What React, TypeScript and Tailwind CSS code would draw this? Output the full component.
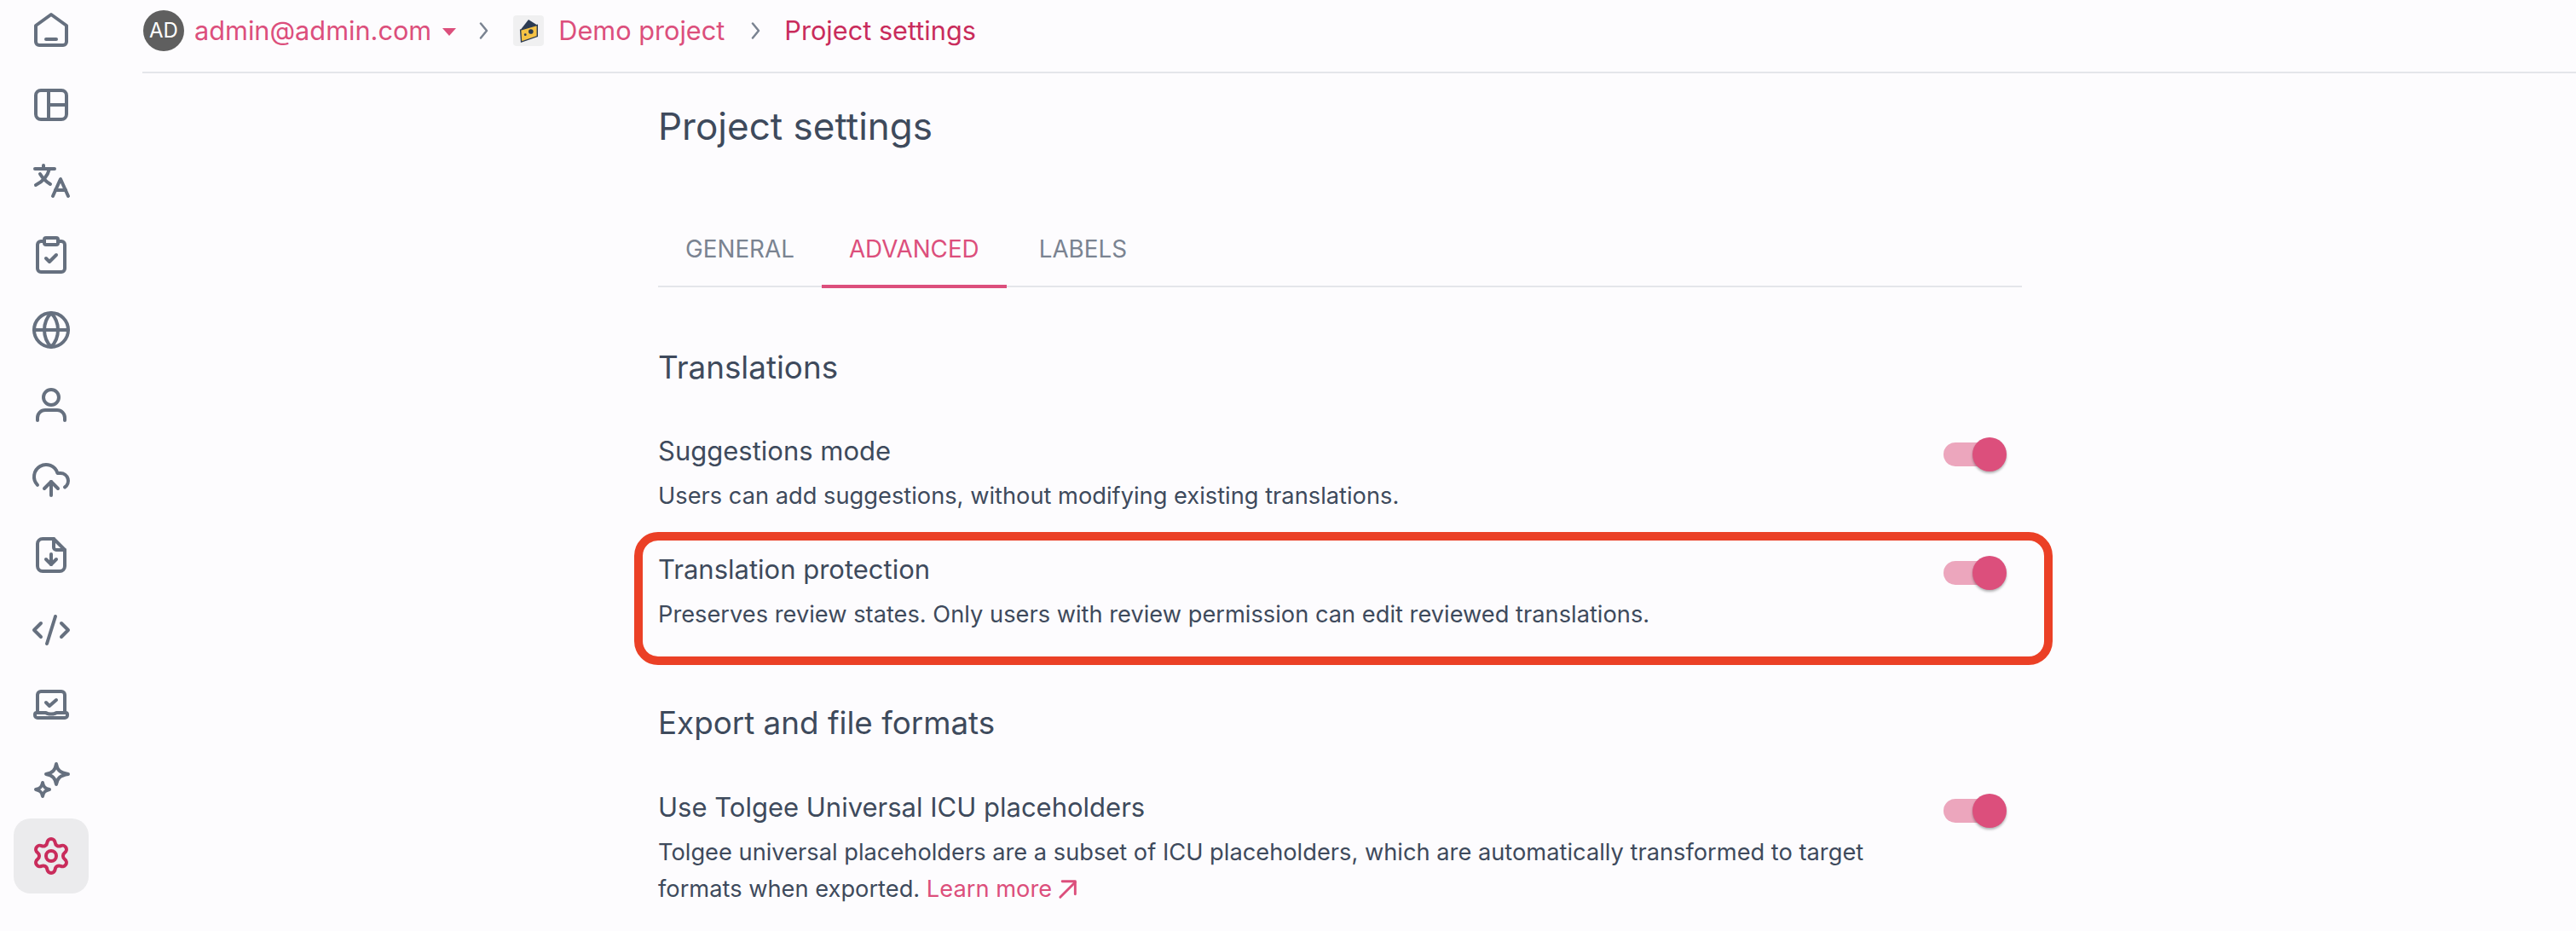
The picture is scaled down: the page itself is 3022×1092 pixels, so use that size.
import { ClipboardCheck, CloudUpload, CodeXml, Globe, Settings } from "lucide-react";
import type { ReactNode } from "react";

function Glyph({ children }: { children: ReactNode }) {
  return (
    <svg
      viewBox="0 0 24 24"
      fill="none"
      stroke="currentColor"
      strokeWidth={2}
      strokeLinecap="round"
      strokeLinejoin="round"
      className="w-12 h-12"
    >
      {children}
    </svg>
  );
}

const lucideProps = { size: 48, strokeWidth: 2 };

const navIcons = [
  <Glyph key="home">
    <path d="M9 17.500h6" />
    <path d="M3 9.500 12 3l9 6.500V19a2 2 0 0 1-2 2H5a2 2 0 0 1-2-2z" />
  </Glyph>,
  <Glyph key="layout">
    <rect x="3" y="3.500" width="18" height="17" rx="3" />
    <path d="M10.500 3.500v17" />
    <path d="M10.500 12H21" />
  </Glyph>,
  <Glyph key="lang">
    <path d="M2.500 5.500H14" />
    <path d="M7.500 3.500v2" />
    <path d="M11 5.500c-1 4-4 7.500-8 9.500" />
    <path d="M5.500 8.500c1.500 2.500 3.500 4.500 6 6" />
    <path d="m22 21.500-4.500-10-4.500 10" />
    <path d="M14.500 18h6" />
  </Glyph>,
  <ClipboardCheck key="tasks" {...lucideProps} />,
  <Globe key="globe" {...lucideProps} />,
  <Glyph key="user">
    <circle cx="12" cy="7.500" r="4.500" />
    <path d="M4 21v-1.500A4.500 4.500 0 0 1 8.500 15h7a4.500 4.500 0 0 1 4.500 4.500V21" />
  </Glyph>,
  <CloudUpload key="import" {...lucideProps} />,
  <Glyph key="export">
    <path d="M13.500 2.500H7a3 3 0 0 0-3 3v13a3 3 0 0 0 3 3h10a3 3 0 0 0 3-3V9z" />
    <path d="M13.500 2.500V7.500a1.500 1.500 0 0 0 1.500 1.500h5" />
    <path d="M12 11.500v6" />
    <path d="m9 14.500 3 3 3-3" />
  </Glyph>,
  <CodeXml key="code" {...lucideProps} />,
  <Glyph key="laptop">
    <path d="M4 16V6a2 2 0 0 1 2-2h12a2 2 0 0 1 2 2v10" />
    <path d="M3.500 16.500h5.500c1 1 5 1 6 0h5.500a1 1 0 0 1 1 1v.500a1.500 1.500 0 0 1-1.500 1.500H4A1.500 1.500 0 0 1 2.500 18v-.500a1 1 0 0 1 1-1z" />
    <path d="m9 10.500 2 2 4-3.500" />
  </Glyph>,
  <Glyph key="sparkles">
    <path d="M15 2.500c.6 3.600 2 5.200 7 6-5 .8-6.400 2.400-7 6-.6-3.600-2-5.200-6-6 4-.8 5.400-2.400 6-6z" />
    <path d="M7 13.500c.4 2.400 1.300 3.400 4 4-2.700.6-3.600 1.600-4 4-.4-2.400-1.300-3.400-4-4 2.700-.6 3.600-1.600 4-4z" />
  </Glyph>,
];

function Sidebar() {
  return (
    <aside className="w-[120px] shrink-0 flex flex-col items-center pt-[11px] text-[#66707f]">
      {navIcons.map((icon, i) => (
        <div key={i} className="h-[88px] flex items-start justify-center">
          {icon}
        </div>
      ))}
      <div className="-mt-[19px] w-[88px] h-[88px] rounded-[20px] bg-[#ebebed] flex items-center justify-center text-[#c92c5c]">
        <Settings {...lucideProps} />
      </div>
    </aside>
  );
}

function Crumb() {
  return (
    <svg viewBox="0 0 13 20" fill="none" stroke="#7a8391" strokeWidth={2.500} strokeLinecap="round" strokeLinejoin="round" className="w-[13px] h-5">
      <path d="m3 1.500 7 8.500-7 8.500" />
    </svg>
  );
}

function Header() {
  return (
    <header className="h-[86px] border-b-2 border-[#e4e6ea] flex items-start pt-3 text-[30.700px] text-[#dc4f7c]">
      <div className="w-12 h-12 rounded-full bg-[#5f5f5f] text-white text-[24px] flex items-center justify-center ml-px">AD</div>
      <span className="ml-3 leading-[48px]">admin@admin.com</span>
      <span className="ml-[13px] mt-[21px] w-0 h-0 border-x-[8px] border-x-transparent border-t-[9px] border-t-[#dc4f7c]" />
      <div className="ml-[26px] mt-[14px]"><Crumb /></div>
      <div className="ml-7 mt-[6px] w-9 h-9 rounded-[4px] bg-[#f0f0f1] flex items-center justify-center">
        <svg viewBox="0 0 28 32" className="w-[28px] h-[30px]">
          <path d="M14 2 25 9 4 15z" fill="#2c3b52" />
          <path d="M4 15 25 9v14L5 30z" fill="#f5c244" stroke="#2c3b52" strokeWidth={1.500} />
          <circle cx="17" cy="17" r="3" fill="#2c3b52" />
          <circle cx="10" cy="21" r="1.500" fill="#2c3b52" />
        </svg>
      </div>
      <span className="ml-[17px] leading-[48px]">Demo project</span>
      <div className="ml-[30px] mt-[14px]"><Crumb /></div>
      <span className="ml-[27px] leading-[48px] text-[#c92c5c]">Project settings</span>
    </header>
  );
}

function Toggle() {
  return (
    <div className="relative w-[74px] h-10 shrink-0 flex items-center">
      <div className="w-[60px] h-7 rounded-full bg-[#eca6bd]" />
      <div className="absolute right-0 top-0 w-10 h-10 rounded-full bg-[#dc4f7c] shadow-[0_2px_3px_rgba(0,0,0,0.3)]" />
    </div>
  );
}

function SettingRow({ title, children }: { title: string; children: ReactNode }) {
  return (
    <div className="flex justify-between items-start pr-[18px]">
      <div className="w-[1460px]">
        <div className="text-[31px] leading-[44px]">{title}</div>
        <div className="text-[27.250px] leading-[43px] mt-[9px]">{children}</div>
      </div>
      <div className="mt-1.5"><Toggle /></div>
    </div>
  );
}

export default function App() {
  return (
    <div className="relative w-[3022px] h-[1092px] overflow-hidden flex bg-[#fdfcfe] text-[#3e4a5c] font-['Inter',sans-serif]">
      <Sidebar />
      <main className="flex-1 pl-[47px]">
        <Header />
        <div className="ml-[605px] w-[1600px]">
          <h1 className="text-[44px] leading-[56px] mt-[34px]">Project settings</h1>
          <div className="mt-[84px] h-[77px] border-b-2 border-[#e4e6ea] flex text-[27.800px] text-[#7a8391] uppercase">
            <div className="px-8 pt-[12px]">General</div>
            <div className="px-8 pt-[12px] h-[78px] text-[#dc4f7c] border-b-4 border-[#dc4f7c]">Advanced</div>
            <div className="px-[38px] pt-[12px]">Labels</div>
          </div>
          <h2 className="text-[36.800px] leading-[48px] mt-[70px]">Translations</h2>
          <div className="mt-[52px]">
            <SettingRow title="Suggestions mode">Users can add suggestions, without modifying existing translations.</SettingRow>
          </div>
          <div className="mt-[43px]">
            <SettingRow title="Translation protection">Preserves review states. Only users with review permission can edit reviewed translations.</SettingRow>
          </div>
          <h2 className="text-[36.800px] leading-[48px] mt-[82px]">Export and file formats</h2>
          <div className="mt-[53px]">
            <SettingRow title="Use Tolgee Universal ICU placeholders">
              Tolgee universal placeholders are a subset of ICU placeholders, which are automatically transformed to target formats when exported.{" "}
              <span className="text-[#dc4f7c]">
                Learn more
                <svg viewBox="0 0 24 24" fill="none" stroke="currentColor" strokeWidth={2.500} strokeLinecap="round" strokeLinejoin="round" className="inline-block w-7 h-7 ml-1 align-[-5px]">
                  <path d="M5 20 20 5" />
                  <path d="M7 4h13v13" />
                </svg>
              </span>
            </SettingRow>
          </div>
        </div>
      </main>
      {/* red annotation over the screenshot */}
      <div className="absolute left-[744px] top-[624px] w-[1664px] h-[156px] border-[10px] border-[#eb4026] rounded-[28px]" />
    </div>
  );
}
